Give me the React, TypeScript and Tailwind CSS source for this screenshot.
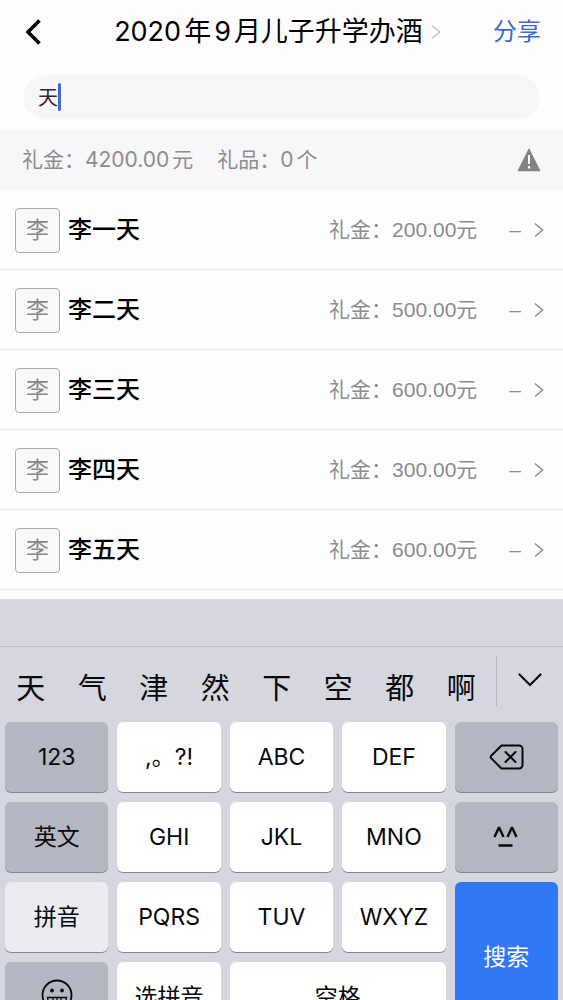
import { useState } from "react";

const INVITADOS = [
  { id: 1, apellido: "李", nombre: "李一天", monto: "200.00" },
  { id: 2, apellido: "李", nombre: "李二天", monto: "500.00" },
  { id: 3, apellido: "李", nombre: "李三天", monto: "600.00" },
  { id: 4, apellido: "李", nombre: "李四天", monto: "300.00" },
  { id: 5, apellido: "李", nombre: "李五天", monto: "600.00" },
];

const CANDIDATOS = ["天", "气", "津", "然", "下", "空", "都", "啊"];

const TECLA = "flex h-[70px] items-center justify-center rounded-md text-[23px] leading-8 shadow-[0_1px_0_#85878d]";
const CLARA = `${TECLA} bg-white`;
const OSCURA = `${TECLA} bg-[#b4b7c1]`;

function Chevron({ className }: { className: string }) {
  return (
    <svg viewBox="0 0 10 16" className={className} fill="none" stroke="currentColor" strokeWidth="1.5">
      <path d="M1 1.5 8.5 8 1 14.5" />
    </svg>
  );
}

function Teclado() {
  return (
    <section aria-label="键盘" className="shrink-0 bg-[#d6d7de] text-[#08090c]">
      <div className="h-12 border-b border-[#c1c2ca]" />
      <div className="flex h-[75px] items-start">
        <div className="grid flex-1 grid-cols-8 pt-[22px]">
          {CANDIDATOS.map(c => (
            <button key={c} className="text-[29px] leading-10">{c}</button>
          ))}
        </div>
        <div className="ml-1 mt-[9px] h-[50px] w-px bg-[#b5b6be]" />
        <button aria-label="展开" className="flex w-[66px] justify-center pt-[26px]">
          <svg viewBox="0 0 24 14" className="h-[14px] w-6" fill="none" stroke="currentColor" strokeWidth="2.2" strokeLinecap="round">
            <path d="M1.5 1.5 12 12 22.5 1.5" />
          </svg>
        </button>
      </div>

      <div className="grid grid-cols-5 gap-x-[9px] gap-y-[10px] px-[5px] pb-2">
        <button className={OSCURA}>123</button>
        <button className={CLARA}>,。?!</button>
        <button className={CLARA}>ABC</button>
        <button className={CLARA}>DEF</button>
        <button aria-label="删除" className={OSCURA}>
          <svg viewBox="0 0 36 26" className="h-[26px] w-9" fill="none" stroke="currentColor" strokeWidth="2" strokeLinecap="round" strokeLinejoin="round">
            <path d="M13.5 1.5H31a3.5 3.5 0 0 1 3.5 3.5v16a3.5 3.5 0 0 1-3.5 3.5H13.5L3.2 14.2a1.7 1.7 0 0 1 0-2.4Z" />
            <path d="m17.5 8 10 10M27.5 8l-10 10" />
          </svg>
        </button>

        <button className={OSCURA}>英文</button>
        <button className={CLARA}>GHI</button>
        <button className={CLARA}>JKL</button>
        <button className={CLARA}>MNO</button>
        <button aria-label="表情符号" className={OSCURA}>
          <svg viewBox="0 0 26 22" className="h-[22px] w-[26px]" fill="none" stroke="currentColor" strokeWidth="2.4">
            <path d="M1.5 11 5.700 2h.6l4.200 9M14.500 11l4.200-9h.6l4.200 9M5.500 19.500h14" />
          </svg>
        </button>

        <button className={`${TECLA} bg-[#ebecf1]`}>拼音</button>
        <button className={CLARA}>PQRS</button>
        <button className={CLARA}>TUV</button>
        <button className={CLARA}>WXYZ</button>
        <button className="row-span-2 flex items-center justify-center rounded-md bg-[#3178f6] text-[23px] text-white">搜索</button>

        <button aria-label="表情" className={`${OSCURA} pb-1`}>
          <svg viewBox="0 0 32 32" className="size-8" fill="none" stroke="currentColor" strokeWidth="1.8">
            <circle cx="16" cy="16" r="14.5" />
            <circle cx="11" cy="11.5" r="1.9" fill="currentColor" stroke="none" />
            <circle cx="21" cy="11.5" r="1.9" fill="currentColor" stroke="none" />
            <path d="M6.5 18.500h19c-.5 5-4.500 8.500-9.500 8.500s-9-3.500-9.500-8.500ZM7.500 22.500h17M12 18.500v7.500M16 18.500v8.500M20 18.500v7.500" strokeWidth="1.3" />
          </svg>
        </button>
        <button className={CLARA}>选拼音</button>
        <button className={`${CLARA} col-span-2`}>空格</button>
      </div>
    </section>
  );
}

export default function App() {
  const [busqueda, setBusqueda] = useState("天");

  return (
    <div className="flex h-screen flex-col overflow-hidden bg-[#fefdfe] font-['Inter','Noto_Sans_CJK_SC',sans-serif] text-black">
      <header className="flex h-16 shrink-0 items-center justify-between px-[22px]">
        <button aria-label="返回" className="w-10">
          <svg viewBox="0 0 20 26" className="h-[26px] w-5" fill="none" stroke="currentColor" strokeWidth="3.6">
            <path d="M17.5 1.5 6 13l11.5 11.5" />
          </svg>
        </button>
        <button className="flex items-center gap-2">
          <h1 className="text-[27px] leading-9">
            2020<span className="mx-[3px]">年</span>9<span className="ml-[3px]">月儿子升学办酒</span>
          </h1>
          <Chevron className="h-4 w-[10px] text-[#c4c4c8]" />
        </button>
        <button className="text-[24px] leading-8 text-[#3f68d8]">分享</button>
      </header>

      <div className="shrink-0 px-[23px] pb-[11px] pt-[11px]">
        <div className="relative">
          <input
            type="text"
            aria-label="搜索"
            value={busqueda}
            onChange={e => setBusqueda(e.target.value)}
            className="block h-11 w-full rounded-full bg-[#f7f6f9] px-[15px] pb-[2px] text-[20px] text-[#2b2b2e] outline-none"
          />
          <span className="absolute left-[35px] top-2 h-7 w-[3px] rounded-full bg-[#4468d4]" />
        </div>
      </div>

      <div className="flex h-[60px] shrink-0 items-center gap-6 bg-[#f7f6f9] px-[22px] text-[21px] leading-8 text-[#8c8c8f]">
        <span>礼金：4200.00<span className="ml-[3px]">元</span></span>
        <span>礼品：0<span className="ml-[3px]">个</span></span>
        <svg viewBox="0 0 24 24" className="ml-auto size-6" aria-label="提醒">
          <path d="M12 1.5 22.5 22.5h-21Z" fill="#848487" stroke="#848487" strokeWidth="1.5" strokeLinejoin="round" />
          <path d="M12 7v9M12 18v2.500" stroke="#fff" strokeWidth="2" />
        </svg>
      </div>

      <ul className="shrink-0 pb-[9px]">
        {INVITADOS.map(i => (
          <li key={i.id} className="border-b border-[#ececf0]">
            <a href="#" className="flex h-[79px] items-center px-[15px] pt-px">
              <span className="flex size-[45px] items-center justify-center rounded border border-[#aaaaad] bg-[#f9f9fa] text-[23px] text-[#88888b]">{i.apellido}</span>
              <span className="ml-2 flex-1 text-[24px] font-medium leading-8">{i.nombre}</span>
              <span className="font-['Liberation_Sans','Noto_Sans_CJK_SC',sans-serif] text-[21px] leading-8 text-[#8c8c8f]">
                礼金：{i.monto}元
              </span>
              <span className="ml-8 font-['Liberation_Sans',sans-serif] text-[21px] leading-8 text-[#8c8c8f]">–</span>
              <Chevron className="ml-[13px] mr-1 h-4 w-[10px] text-[#8c8c8f]" />
            </a>
          </li>
        ))}
      </ul>

      <Teclado />
    </div>
  );
}
